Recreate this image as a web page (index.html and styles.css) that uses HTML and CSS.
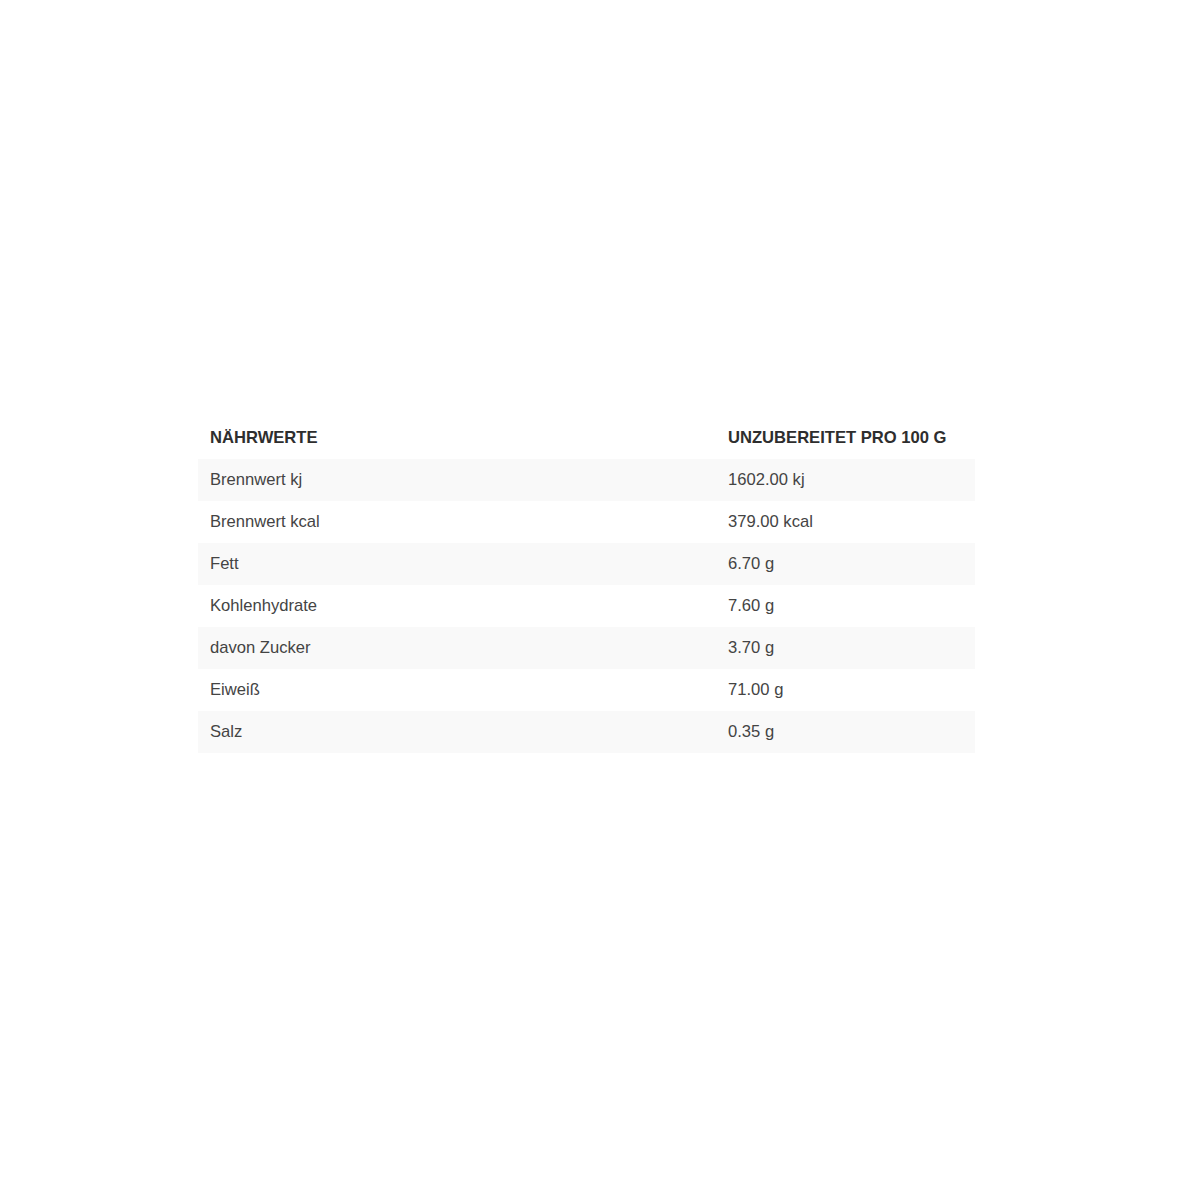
FILE: index.html
```html
<!DOCTYPE html>
<html lang="de">
<head>
<meta charset="utf-8">
<title>Nährwerte</title>
<link rel="stylesheet" href="styles.css">
</head>
<body>
<main class="page">
  <table class="nutrition">
    <thead>
      <tr><th class="col-name">NÄHRWERTE</th><th class="col-value">UNZUBEREITET PRO 100 G</th></tr>
    </thead>
    <tbody>
      <tr><td>Brennwert kj</td><td>1602.00 kj</td></tr>
      <tr><td>Brennwert kcal</td><td>379.00 kcal</td></tr>
      <tr><td>Fett</td><td>6.70 g</td></tr>
      <tr><td>Kohlenhydrate</td><td>7.60 g</td></tr>
      <tr><td>davon Zucker</td><td>3.70 g</td></tr>
      <tr><td>Eiweiß</td><td>71.00 g</td></tr>
      <tr><td>Salz</td><td>0.35 g</td></tr>
    </tbody>
  </table>
</main>
</body>
</html>
```
FILE: styles.css
```css
html, body {
  margin: 0;
  padding: 0;
  background: #ffffff;
}
.page {
  padding: 417px 0 0 198px;
  font-family: "Liberation Sans", Arial, sans-serif;
}
.nutrition {
  border-collapse: collapse;
  table-layout: fixed;
  width: 777px;
  font-size: 16.6px;
  color: #444444;
}
.nutrition th,
.nutrition td {
  box-sizing: border-box;
  height: 42px;
  padding: 0 12px;
  text-align: left;
  vertical-align: middle;
  white-space: nowrap;
}
.col-name {
  width: 518px;
}
.col-value {
  width: 259px;
}
.nutrition th {
  font-weight: bold;
  color: #2e2e2e;
}
.nutrition tbody tr:nth-child(odd) {
  background: #f9f9f9;
}
```
